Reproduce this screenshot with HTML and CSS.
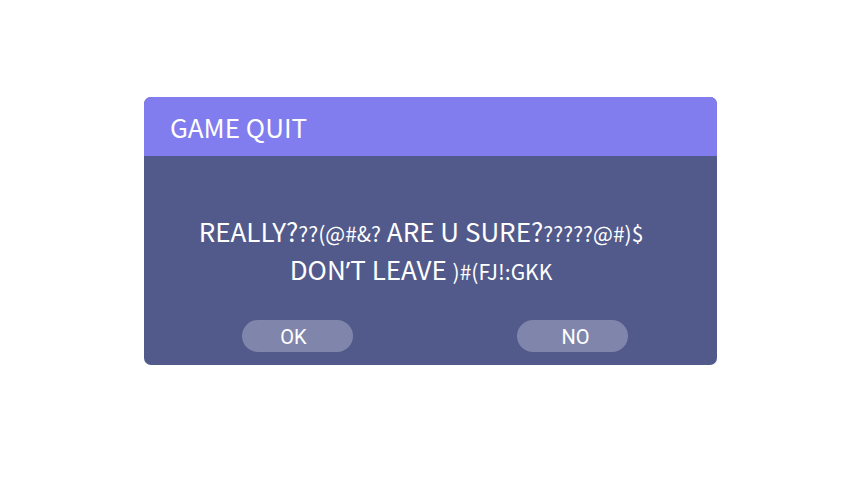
FILE: index.html
```html
<!DOCTYPE html>
<html>
<head>
<meta charset="utf-8">
<link rel="stylesheet" href="styles.css">
</head>
<body>
<div class="page">
  <div class="dialog">
    <div class="dialog-header">GAME QUIT</div>
    <div class="dialog-body">
      <div class="message">
        <div class="line">REALLY?<span class="small">??(@#&amp;?</span> ARE U SURE?<span class="small">?????@#)$</span></div>
        <div class="line">DON<span class="apos">’</span>T LEAVE <span class="small">)#(FJ!:GKK</span></div>
      </div>
      <div class="actions">
        <button class="btn btn-ok">OK</button>
        <button class="btn btn-no">NO</button>
      </div>
    </div>
  </div>
</div>
</body>
</html>
```
FILE: styles.css
```css
html, body {
  margin: 0;
  padding: 0;
  background: #ffffff;
}
.page {
  width: 861px;
  height: 486px;
  padding-top: 97px;
  padding-left: 144px;
  box-sizing: border-box;
}
.dialog {
  width: 573px;
  height: 268px;
  border-radius: 7px;
  overflow: hidden;
  background: #525a8b;
  display: flex;
  flex-direction: column;
  font-family: "Noto Sans CJK SC", "Noto Sans", sans-serif;
  color: #ffffff;
}
.dialog-header {
  height: 59px;
  background: #817dee;
  font-size: 26px;
  line-height: 59px;
  padding-left: 26px;
}
.dialog-body {
  flex: 1;
  display: flex;
  flex-direction: column;
}
.message {
  padding-top: 57px;
  padding-right: 19px;
  text-align: center;
  font-size: 26px;
  line-height: 36px;
}
.small {
  font-size: 21px;
}
.apos {
  font-family: "Noto Sans", sans-serif;
}
.actions {
  margin-top: 31px;
  display: flex;
  justify-content: space-between;
  padding: 0 89px 0 98px;
}
.btn {
  width: 111px;
  height: 32px;
  border: none;
  border-radius: 16px;
  background: #8086ab;
  color: #ffffff;
  font-family: "Roboto", sans-serif;
  font-size: 20px;
  padding: 2px 0 0 0;
}
.btn-ok {
  padding-right: 8px;
}
.btn-no {
  padding-left: 6px;
}
```
